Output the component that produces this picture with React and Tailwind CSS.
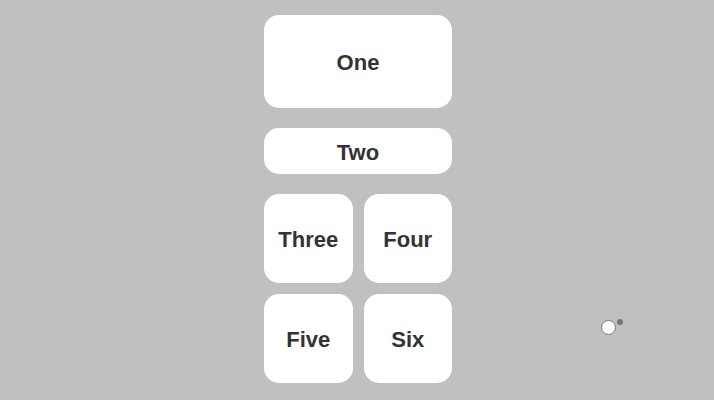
export default function App() {
  const card = "bg-white rounded-[15px] flex items-center justify-center pt-[2px] text-[22px] font-bold text-[#333333]";
  return (
    <div className="relative w-[714px] h-[400px] bg-[#c0c0c0] overflow-hidden pl-[2px]" style={{ fontFamily: '"Liberation Sans", Arial, sans-serif' }}>
      <div className="mx-auto w-[188px] pt-[15px] flex flex-col">
        <div className={`${card} h-[93px]`}>One</div>
        <div className={`${card} h-[46px] mt-[20px]`}>Two</div>
        <div className="grid grid-cols-2 gap-[11px] mt-[20px]">
          <div className={`${card} h-[89px]`}>Three</div>
          <div className={`${card} h-[89px]`}>Four</div>
          <div className={`${card} h-[89px]`}>Five</div>
          <div className={`${card} h-[89px]`}>Six</div>
        </div>
      </div>
      <div className="absolute left-[601px] top-[320px] w-[15px] h-[15px] rounded-full bg-white border border-[#777777]"></div>
      <div className="absolute left-[617px] top-[319px] w-[6px] h-[6px] rounded-full bg-[#777777]"></div>
    </div>
  );
}
